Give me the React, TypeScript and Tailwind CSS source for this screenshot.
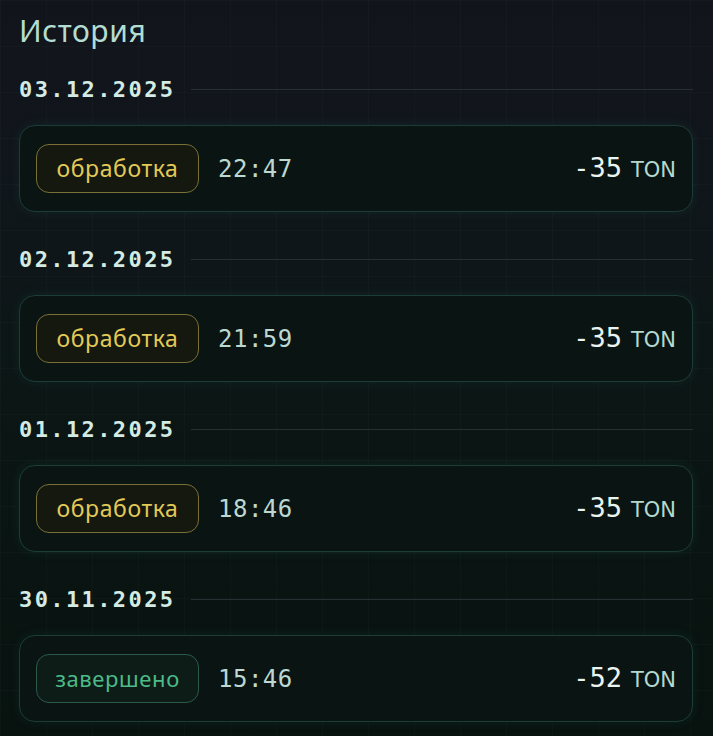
const items = [
  { date: "03.12.2025", status: "pending", time: "22:47", amount: "-35" },
  { date: "02.12.2025", status: "pending", time: "21:59", amount: "-35" },
  { date: "01.12.2025", status: "pending", time: "18:46", amount: "-35" },
  { date: "30.11.2025", status: "done", time: "15:46", amount: "-52" },
];

function StatusBadge({ status }: { status: string }) {
  if (status === "done") {
    return (
      <div className="w-[163px] h-[49px] flex items-center justify-center rounded-[13px] border border-[#2b5a4a] bg-[#0e1c18] text-[#4cbb88] text-[22px] tracking-[0.6px] font-['Noto_Sans',sans-serif]">
        завершено
      </div>
    );
  }
  return (
    <div className="w-[163px] h-[49px] flex items-center justify-center rounded-[13px] border border-[#7a7035] bg-[#14180f] text-[#e2ca58] text-[23px] tracking-[0.6px] font-['Noto_Sans',sans-serif]">
      обработка
    </div>
  );
}

export default function App() {
  return (
    <div className="w-[713px] h-[736px] overflow-hidden bg-[linear-gradient(180deg,#12141c_0%,#10161b_25%,#0b1614_60%,#08120f_100%)]">
      <div className="h-full bg-[linear-gradient(rgba(120,160,150,0.035)_1px,transparent_1px),linear-gradient(90deg,rgba(120,160,150,0.035)_1px,transparent_1px)] bg-[size:46px_46px] pl-[19px] pr-[20px] pt-[11px]">
        <h1 className="text-[30px] leading-[39px] text-[#b3ddd0] tracking-[0.6px] font-['Noto_Sans',sans-serif]">
          История
        </h1>
        <div className="mt-[27px] flex flex-col">
          {items.map((it, i) => (
            <div key={i} className={i > 0 ? "mt-[35px]" : ""}>
              <div className="h-[24px] flex items-center gap-[16px]">
                <span className="text-[22px] font-bold tracking-[2.4px] text-[#d3ebe3] font-['DejaVu_Sans_Mono',monospace]">
                  {it.date}
                </span>
                <div className="flex-1 h-px bg-[#262f31]" />
              </div>
              <div className="mt-[24px] h-[87px] rounded-[16px] border border-[#1b3d36] bg-[#091413] shadow-[0_0_12px_rgba(40,130,110,0.14)] flex items-center pl-[16px] pr-[16px]">
                <StatusBadge status={it.status} />
                <span className="ml-[19px] text-[24px] tracking-[0.5px] text-[#bcd8d1] font-['DejaVu_Sans_Mono',monospace]">
                  {it.time}
                </span>
                <div className="ml-auto flex items-baseline gap-[9px]">
                  <span className="text-[27px] text-[#e9f3f0] font-['DejaVu_Sans_Mono',monospace]">
                    {it.amount}
                  </span>
                  <span className="text-[21px] text-[#b4d8ce] font-['DejaVu_Sans',sans-serif]">
                    TON
                  </span>
                </div>
              </div>
            </div>
          ))}
        </div>
      </div>
    </div>
  );
}
